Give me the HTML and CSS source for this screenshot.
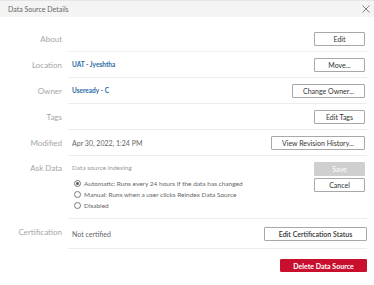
FILE: index.html
```html
<!DOCTYPE html>
<html lang="en">
<head>
    <meta charset="UTF-8">
    <title>Data Source Details</title>
    <link rel="stylesheet" href="styles.css">
</head>
<body>
    <div class="dialog">
        <div class="dialog-header">
            <span class="dialog-title">Data Source Details</span>
            <svg class="close" width="8" height="8" viewBox="0 0 8 8">
                <path d="M0.5 0.5 L7.5 7.5 M7.5 0.5 L0.5 7.5" stroke="#777" stroke-width="0.9" fill="none"/>
            </svg>
        </div>
        <div class="details">
            <div class="row first">
                <div class="label">About</div>
                <div class="value">
                    <span></span>
                    <button class="btn">Edit</button>
                </div>
            </div>
            <div class="row">
                <div class="label">Location</div>
                <div class="value">
                    <a class="link">UAT - Jyeshtha</a>
                    <button class="btn">Move...</button>
                </div>
            </div>
            <div class="row">
                <div class="label">Owner</div>
                <div class="value">
                    <a class="link">Useready - C</a>
                    <button class="btn">Change Owner...</button>
                </div>
            </div>
            <div class="row">
                <div class="label">Tags</div>
                <div class="value">
                    <span></span>
                    <button class="btn">Edit Tags</button>
                </div>
            </div>
            <div class="row">
                <div class="label">Modified</div>
                <div class="value">
                    <span class="text">Apr 30, 2022, 1:24 PM</span>
                    <button class="btn">View Revision History...</button>
                </div>
            </div>
            <div class="row ask">
                <div class="label">Ask Data</div>
                <div class="value">
                    <div class="indexing">
                        <div class="text muted">Data source indexing</div>
                        <label class="radio"><span class="dot checked"></span>Automatic: Runs every 24 hours if the data has changed</label>
                        <label class="radio"><span class="dot"></span>Manual: Runs when a user clicks Reindex Data Source</label>
                        <label class="radio"><span class="dot"></span>Disabled</label>
                    </div>
                    <div class="actions">
                        <button class="btn btn-disabled">Save</button>
                        <button class="btn">Cancel</button>
                    </div>
                </div>
            </div>
            <div class="row cert">
                <div class="label">Certification</div>
                <div class="value">
                    <span class="text">Not certified</span>
                    <button class="btn btn-wide">Edit Certification Status</button>
                </div>
            </div>
            <div class="footer">
                <button class="btn btn-danger">Delete Data Source</button>
            </div>
        </div>
    </div>
</body>
</html>
```

FILE: styles.css
```css
body {
    margin: 0;
    font-family: Lato, "Liberation Sans", sans-serif;
    background: #fff;
    color: #666;
}
.dialog {
    width: 374px;
    height: 285px;
}
.dialog-header {
    display: flex;
    justify-content: space-between;
    align-items: center;
    height: 17px;
    padding: 0 4px 0 8px;
    background: #f4f4f4;
    border-top: 1px solid #e6e6e6;
    box-sizing: border-box;
}
.dialog-title {
    font-size: 7px;
    color: #666;
}
.details {
    padding-top: 9px;
}
.row {
    display: flex;
    height: 26px;
}
.row.ask {
    height: 63px;
}
.row.cert {
    height: 30px;
}
.label {
    width: 62px;
    padding-right: 6px;
    text-align: right;
    font-size: 8px;
    color: #a5a5a5;
    line-height: 26px;
}
.value {
    flex: 1;
    margin-right: 7px;
    padding: 0 2px 0 4px;
    display: flex;
    justify-content: space-between;
    align-items: center;
    border-bottom: 1px solid #ececec;
}
.row.first .value {
    border-bottom-color: #f0f0f0;
}
.row.ask .value {
    align-items: flex-start;
    padding-top: 6px;
    box-sizing: border-box;
}
.row.ask .label {
    line-height: 24px;
}
.row.cert .value {
    padding-right: 0;
}
.link {
    font-size: 6.5px;
    font-weight: bold;
    color: #2c6aa6;
}
.text {
    font-size: 7px;
    color: #666;
}
.muted {
    font-size: 6.5px;
    color: #999;
    line-height: 12px;
    margin-bottom: 4px;
}
.radio {
    display: flex;
    align-items: center;
    font-size: 6.5px;
    color: #666;
    height: 11px;
    padding-left: 2px;
}
.dot {
    width: 5px;
    height: 5px;
    border: 1px solid #777;
    border-radius: 50%;
    margin-right: 3px;
    position: relative;
}
.dot.checked::after {
    content: "";
    position: absolute;
    left: 1px;
    top: 1px;
    width: 3px;
    height: 3px;
    border-radius: 50%;
    background: #555;
}
.actions {
    display: flex;
    flex-direction: column;
    gap: 2px;
}
.btn {
    font-family: Lato, "Liberation Sans", sans-serif;
    font-size: 7px;
    color: #333;
    background: #fff;
    border: 1px solid #a8a8a8;
    border-radius: 1px;
    height: 14px;
    min-width: 51px;
    padding: 0 10px;
    cursor: pointer;
}
.btn-wide {
    width: 103px;
    padding: 0 6px;
    font-weight: 600;
}
.btn-disabled {
    background: #cfcfcf;
    border-color: #cfcfcf;
    color: #fff;
}
.footer {
    display: flex;
    justify-content: flex-end;
    padding: 10px 7px 0 0;
}
.btn-danger {
    width: 87px;
    height: 13px;
    padding: 0 6px;
    background: #c8102e;
    border-color: #c8102e;
    color: #fff;
    font-weight: bold;
}
```
